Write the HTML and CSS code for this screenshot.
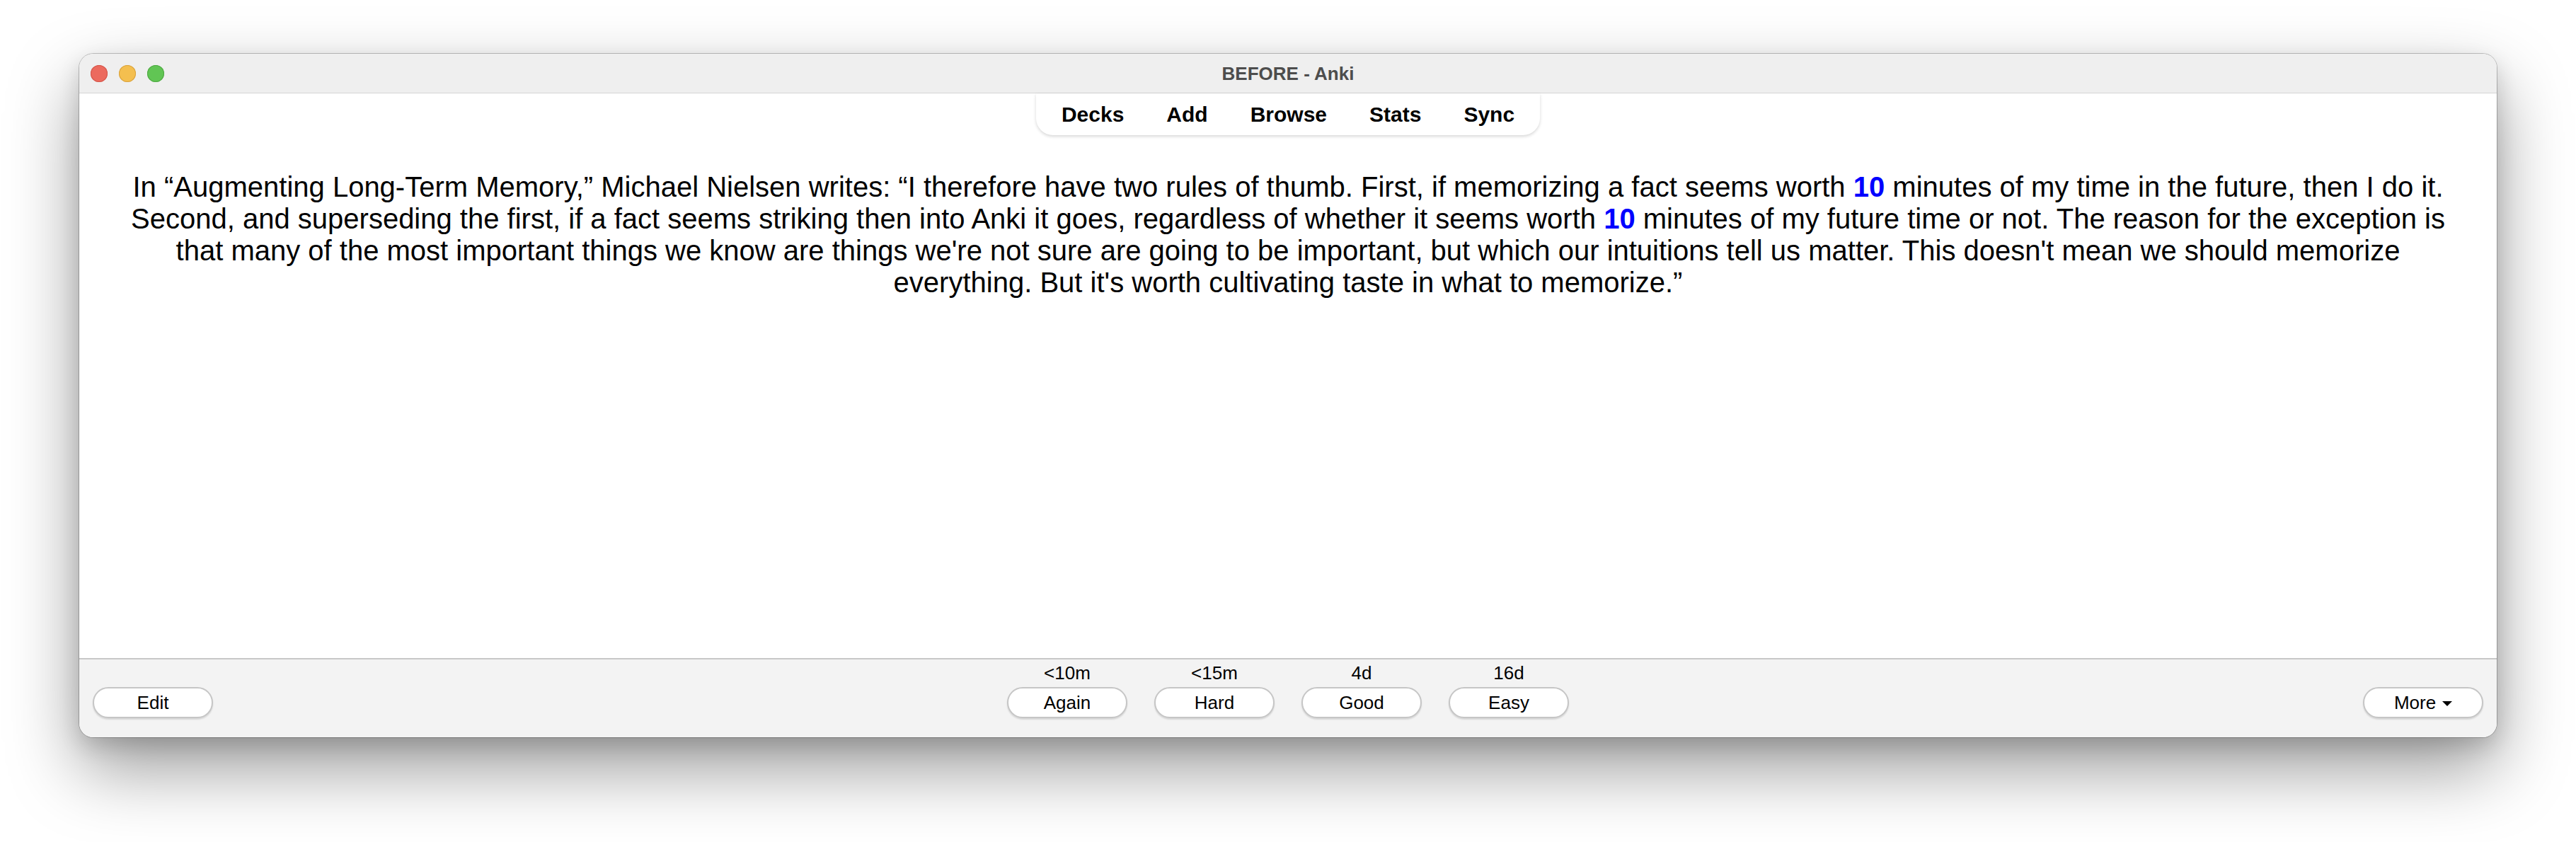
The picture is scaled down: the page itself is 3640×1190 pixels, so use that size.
FILE: index.html
```html
<!DOCTYPE html>
<html lang="en">
<head>
<meta charset="utf-8">
<title>BEFORE - Anki</title>
<link rel="stylesheet" href="styles.css">
</head>
<body>
<div class="window">
  <header class="titlebar">
    <div class="lights">
      <span class="light red"></span>
      <span class="light yellow"></span>
      <span class="light green"></span>
    </div>
    <div class="title">BEFORE - Anki</div>
    <div class="spacer"></div>
  </header>
  <main class="content">
    <nav class="toolbar">
      <span class="tab">Decks</span>
      <span class="tab">Add</span>
      <span class="tab">Browse</span>
      <span class="tab">Stats</span>
      <span class="tab">Sync</span>
    </nav>
    <div class="card">
      <p class="question">In “Augmenting Long-Term Memory,” Michael Nielsen writes: “I therefore have two rules of thumb. First, if memorizing a fact seems worth <b class="hl">10</b> minutes of my time in the future, then I do it.<br>Second, and superseding the first, if a fact seems striking then into Anki it goes, regardless of whether it seems worth <b class="hl">10</b> minutes of my future time or not. The reason for the exception is<br>that many of the most important things we know are things we're not sure are going to be important, but which our intuitions tell us matter. This doesn't mean we should memorize<br>everything. But it's worth cultivating taste in what to memorize.”</p>
    </div>
  </main>
  <footer class="bottombar">
    <div class="side side-left">
      <button class="btn">Edit</button>
    </div>
    <div class="answers">
      <div class="answer"><span class="due">&lt;10m</span><button class="btn">Again</button></div>
      <div class="answer"><span class="due">&lt;15m</span><button class="btn">Hard</button></div>
      <div class="answer"><span class="due">4d</span><button class="btn">Good</button></div>
      <div class="answer"><span class="due">16d</span><button class="btn">Easy</button></div>
    </div>
    <div class="side side-right">
      <button class="btn btn-more">More<span class="caret"></span></button>
    </div>
  </footer>
</div>
</body>
</html>
```

FILE: styles.css
```css
* {
  box-sizing: border-box;
}

html, body {
  margin: 0;
  background: #ffffff;
}

html {
  min-height: 1190px;
}

body {
  min-height: 1190px;
  padding: 76px 112px 148px;
  font-family: "Liberation Sans", Arial, Helvetica, sans-serif;
  color: #000;
}

.window {
  height: 966px;
  display: flex;
  flex-direction: column;
  border-radius: 20px;
  overflow: hidden;
  background: #ffffff;
  box-shadow: 0 0 0 1px rgba(0, 0, 0, 0.22), 0 44px 100px rgba(0, 0, 0, 0.4), 0 12px 30px rgba(0, 0, 0, 0.14);
}

/* Title bar */
.titlebar {
  height: 56px;
  flex: none;
  display: grid;
  grid-template-columns: 1fr auto 1fr;
  align-items: center;
  background: #efefef;
  border-bottom: 1px solid #d5d5d5;
}

.lights {
  display: flex;
  gap: 16px;
  padding-left: 16px;
}

.light {
  width: 24px;
  height: 24px;
  border-radius: 50%;
  display: block;
}

.red {
  background: #ec6a5e;
  box-shadow: inset 0 0 0 1px #d25549;
}

.yellow {
  background: #f4bf4f;
  box-shadow: inset 0 0 0 1px #d8a23f;
}

.green {
  background: #61c554;
  box-shadow: inset 0 0 0 1px #4fa843;
}

.title {
  font-weight: bold;
  font-size: 26px;
  color: #4d4d4d;
  line-height: 56px;
}

/* Main content */
.content {
  flex: 1;
  display: flex;
  flex-direction: column;
  align-items: center;
  background: #ffffff;
}

.toolbar {
  display: flex;
  height: 59px;
  padding: 0 6px;
  background: #ffffff;
  border-radius: 0 0 24px 24px;
  box-shadow: 0 2px 4px rgba(0, 0, 0, 0.16);
}

.tab {
  padding: 0 30px;
  font-weight: bold;
  font-size: 30px;
  line-height: 59px;
  color: #000;
}

.card {
  align-self: stretch;
  padding: 51px 40px 0;
}

.question {
  margin: 0;
  font-size: 40px;
  line-height: 45px;
  text-align: center;
  white-space: nowrap;
}

.hl {
  color: #0000ff;
  font-weight: bold;
}

/* Bottom bar */
.bottombar {
  flex: none;
  height: 112px;
  display: flex;
  align-items: flex-end;
  padding: 4px 19px 27px;
  background: #f3f3f3;
  border-top: 2px solid #c8c8c8;
}

.side {
  flex: 1;
  display: flex;
}

.side-right {
  justify-content: flex-end;
}

.answers {
  display: flex;
  gap: 38px;
}

.answer {
  display: flex;
  flex-direction: column;
  align-items: center;
  gap: 5px;
  width: 170px;
}

.due {
  font-size: 26px;
  line-height: 30px;
  color: #000;
}

.btn {
  width: 170px;
  height: 44px;
  margin: 0;
  padding: 0;
  display: flex;
  align-items: center;
  justify-content: center;
  font-family: "Liberation Sans", Arial, Helvetica, sans-serif;
  font-size: 26px;
  line-height: 30px;
  color: #000;
  background: #ffffff;
  border: 2px solid #c6c6c6;
  border-radius: 22px;
  box-shadow: 0 2px 2px rgba(0, 0, 0, 0.12);
}

.btn-more {
  gap: 9px;
}

.caret {
  width: 0;
  height: 0;
  border-left: 7.5px solid transparent;
  border-right: 7.5px solid transparent;
  border-top: 7px solid #000;
  margin-top: 2px;
}
```
